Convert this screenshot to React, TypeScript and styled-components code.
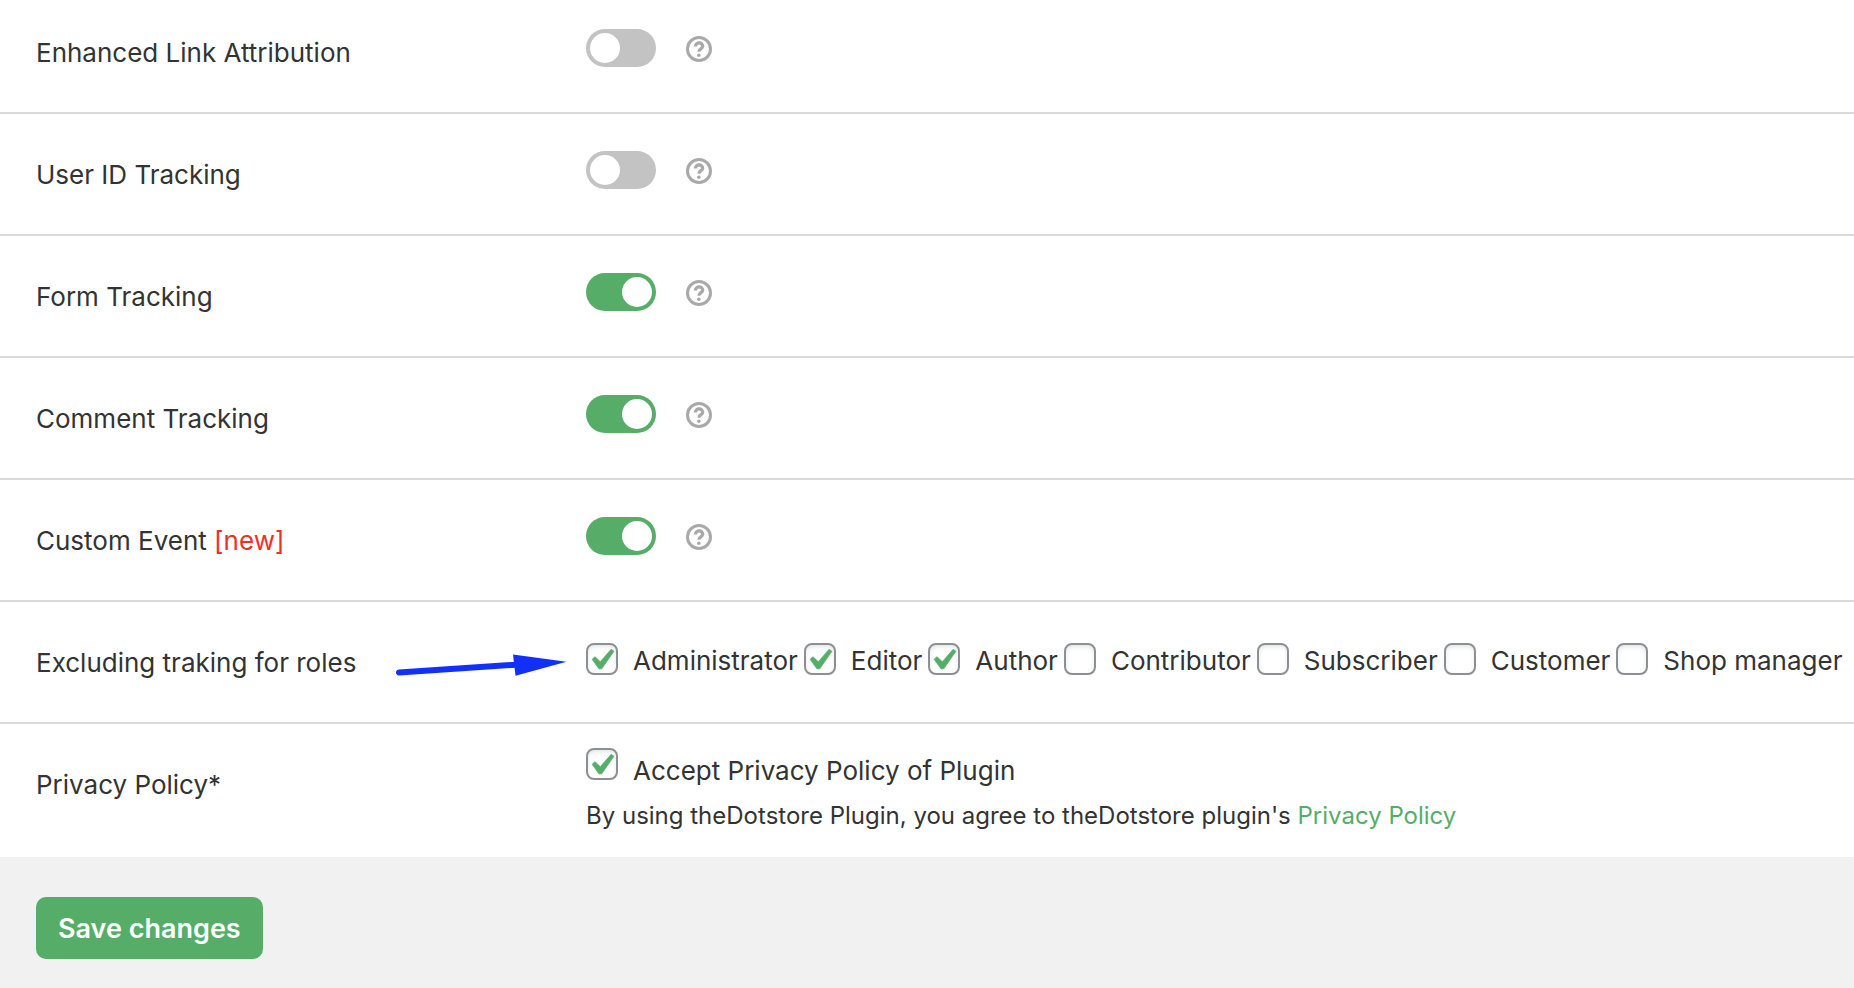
import React, { useState } from "react";
import styled, { createGlobalStyle } from "styled-components";

const GlobalStyle = createGlobalStyle`
  *, *::before, *::after { box-sizing: border-box; }
  body {
    margin: 0;
    background: #f1f1f1;
    color: #333;
    font-family: Inter, "Liberation Sans", sans-serif;
    font-size: 26px;
    line-height: 32px;
  }
`;

const Settings = styled.form`
  min-height: 100vh;
  background: #f1f1f1;
`;

const Panel = styled.div`
  background: #fff;
  margin-top: -8px;
`;

const Row = styled.div`
  display: grid;
  grid-template-columns: 586px 1fr;
  min-height: 122px;
  border-bottom: 2px solid #dadada;

  &:last-child {
    min-height: 0;
    border-bottom: 0;
  }
`;

const LabelCell = styled.div`
  display: flex;
  align-items: center;
  justify-content: space-between;
  height: 120px;
  padding: 2px 18px 0 36px;
`;

const NewTag = styled.span`
  color: #f03022;
`;

const SwitchCell = styled.div`
  display: flex;
  align-items: center;
  gap: 30px;
  padding-bottom: 8px;
`;

const Switch = styled.input`
  appearance: none;
  display: flex;
  width: 70px;
  height: 38px;
  margin: 0;
  padding: 4px;
  border-radius: 19px;
  background: #c3c3c3;
  cursor: pointer;

  &::before {
    content: "";
    width: 30px;
    height: 30px;
    border-radius: 50%;
    background: #fff;
  }

  &:checked {
    justify-content: flex-end;
    background: #56ad68;
  }
`;

const HelpButton = styled.button`
  display: flex;
  padding: 2px 0 0;
  border: 0;
  background: none;
  color: #a9a9a9;
  cursor: help;
`;

const RolesCell = styled.div`
  display: flex;
  flex-wrap: wrap;
  align-items: center;
  align-content: center;
  column-gap: 6px;
  padding-bottom: 6px;
`;

const Option = styled.label<{ $low?: boolean }>`
  display: flex;
  align-items: ${(p) => (p.$low ? "flex-start" : "center")};
  gap: 15px;
`;

const OptionText = styled.span<{ $low?: boolean }>`
  padding-top: ${(p) => (p.$low ? "7px" : "4px")};
`;

const TickWrap = styled.span`
  display: inline-grid;
  flex: none;

  > * { grid-area: 1 / 1; }
`;

const TickInput = styled.input`
  appearance: none;
  width: 32px;
  height: 32px;
  margin: 0;
  border: 2px solid #8c8f94;
  border-radius: 8px;
  background: #fff;
  box-shadow: inset 0 2px 4px rgba(0, 0, 0, 0.1);
  cursor: pointer;
`;

const TickMark = styled.svg`
  visibility: hidden;
  pointer-events: none;
  fill: #56ad68;
  stroke: #56ad68;
  stroke-width: 0.35;
  stroke-linejoin: round;

  ${TickInput}:checked + & { visibility: visible; }
`;

const PolicyCell = styled.div`
  padding: 24px 0 25px;
`;

const PolicyNote = styled.p`
  margin: 13px 0 0;
  font-size: 24px;
`;

const PolicyLink = styled.a`
  color: #56ad68;
  text-decoration: none;
`;

const Footer = styled.div`
  padding: 40px 36px 29px;
`;

const SaveButton = styled.button`
  height: 62px;
  padding: 2px 22px 0;
  border: 0;
  border-radius: 10px;
  background: #56ad68;
  color: #fff;
  font: 600 27px/32px Inter, "Liberation Sans", sans-serif;
  cursor: pointer;
`;

function Help({ topic }: { topic: string }) {
  return (
    <HelpButton type="button" aria-label={`Help: ${topic}`}>
      <svg width="26" height="26" viewBox="0 0 26 26" fill="none" stroke="currentColor">
        <circle cx="13" cy="13" r="11.5" strokeWidth="3" />
        <path d="M9.4 10.6C9.4 5.8 16.7 5.8 16.7 10.2C16.7 12.8 12.9 12.6 12.9 15.8" strokeWidth="3.3" />
        <circle cx="12.8" cy="19.3" r="1.8" fill="currentColor" stroke="none" />
      </svg>
    </HelpButton>
  );
}

function Tick({ initial }: { initial?: boolean }) {
  return (
    <TickWrap>
      <TickInput type="checkbox" defaultChecked={initial} />
      <TickMark width="32" height="32" viewBox="2.86 1.9 15.24 15.24" aria-hidden="true">
        <path d="M14.83 4.89l1.34.94-5.81 8.38H9.02L5.78 9.67l1.34-1.25 2.57 2.4z" />
      </TickMark>
    </TickWrap>
  );
}

function Arrow() {
  return (
    <svg width="172" height="30" viewBox="0 1 172 30" fill="#1130fa" aria-hidden="true">
      <path d="M3 25.4L120 17.7" stroke="#1130fa" strokeWidth="6" strokeLinecap="round" />
      <path d="M117 7.6L170.5 14.7L119.5 28.8Z" />
    </svg>
  );
}

function SwitchRow({ name, isNew, initial }: { name: string; isNew?: boolean; initial: boolean }) {
  const [on, setOn] = useState(initial);
  const id = name.toLowerCase().replace(/ /g, "-");
  return (
    <Row>
      <LabelCell>
        <label htmlFor={id}>
          {name}
          {isNew && <NewTag> [new]</NewTag>}
        </label>
      </LabelCell>
      <SwitchCell>
        <Switch id={id} type="checkbox" role="switch" checked={on} onChange={(e) => setOn(e.target.checked)} />
        <Help topic={name} />
      </SwitchCell>
    </Row>
  );
}

const switches = [
  { name: "Enhanced Link Attribution", initial: false },
  { name: "User ID Tracking", initial: false },
  { name: "Form Tracking", initial: true },
  { name: "Comment Tracking", initial: true },
  { name: "Custom Event", initial: true, isNew: true },
];

const roles = [
  { name: "Administrator", initial: true },
  { name: "Editor", initial: true },
  { name: "Author", initial: true },
  { name: "Contributor" },
  { name: "Subscriber" },
  { name: "Customer" },
  { name: "Shop manager" },
];

export default function App() {
  return (
    <Settings onSubmit={(e) => e.preventDefault()}>
      <GlobalStyle />
      <Panel>
        {switches.map((s) => (
          <SwitchRow key={s.name} {...s} />
        ))}
        <Row role="group" aria-labelledby="roles-label">
          <LabelCell>
            <span id="roles-label">Excluding traking for roles</span>
            <Arrow />
          </LabelCell>
          <RolesCell>
            {roles.map((r) => (
              <Option key={r.name}>
                <Tick initial={r.initial} />
                <OptionText>{r.name}</OptionText>
              </Option>
            ))}
          </RolesCell>
        </Row>
        <Row role="group" aria-labelledby="policy-label">
          <LabelCell>
            <span id="policy-label">Privacy Policy*</span>
          </LabelCell>
          <PolicyCell>
            <Option $low>
              <Tick initial />
              <OptionText $low>Accept Privacy Policy of Plugin</OptionText>
            </Option>
            <PolicyNote>
              By using theDotstore Plugin, you agree to theDotstore plugin's{" "}
              <PolicyLink href="#privacy-policy">Privacy Policy</PolicyLink>
            </PolicyNote>
          </PolicyCell>
        </Row>
      </Panel>
      <Footer>
        <SaveButton type="submit">Save changes</SaveButton>
      </Footer>
    </Settings>
  );
}
